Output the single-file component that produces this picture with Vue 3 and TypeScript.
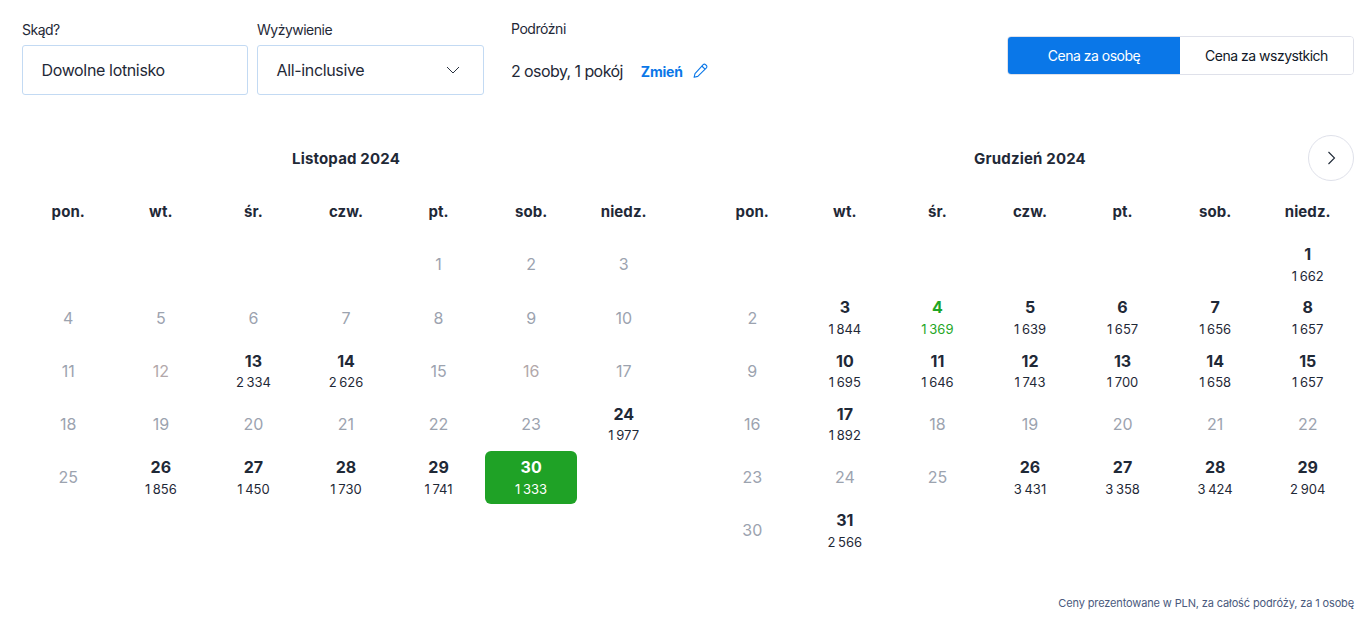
<script setup lang="ts">
type Day = { d: number; p?: string; low?: boolean; sel?: boolean; tint?: boolean }
const weekdays = ['pon.', 'wt.', 'śr.', 'czw.', 'pt.', 'sob.', 'niedz.']
function build(offset: number, count: number, prices: Record<number, string>, low: number[], sel: number[], tint: number[]) {
  const cells: (Day | null)[] = Array.from({ length: offset }, () => null)
  for (let d = 1; d <= count; d++) {
    cells.push({ d, p: prices[d], low: low.includes(d), sel: sel.includes(d), tint: tint.includes(d) })
  }
  return cells
}
const months = [
  {
    title: 'Listopad 2024',
    cells: build(4, 30, { 13: '2 334', 14: '2 626', 24: '1 977', 26: '1 856', 27: '1 450', 28: '1 730', 29: '1 741', 30: '1 333' }, [], [30], [12, 16])
  },
  {
    title: 'Grudzień 2024',
    cells: build(6, 31, { 1: '1 662', 3: '1 844', 4: '1 369', 5: '1 639', 6: '1 657', 7: '1 656', 8: '1 657', 10: '1 695', 11: '1 646', 12: '1 743', 13: '1 700', 14: '1 658', 15: '1 657', 17: '1 892', 26: '3 431', 27: '3 358', 28: '3 424', 29: '2 904', 31: '2 566' }, [4], [], [])
  }
]
</script>

<template>
  <div class="page">
    <header class="top">
      <div class="field from">
        <label>Skąd?</label>
        <div class="box">Dowolne lotnisko</div>
      </div>
      <div class="field board">
        <label>Wyżywienie</label>
        <div class="box select">
          <span>All-inclusive</span>
          <svg width="14" height="8" viewBox="0 0 14 8" fill="none"><path d="M1 1l6 6 6-6" stroke="#2a3240" stroke-width="1"/></svg>
        </div>
      </div>
      <div class="travellers">
        <div class="t-label">Podróżni</div>
        <div class="t-row">
          <span>2 osoby, 1 pokój</span>
          <a class="change">Zmień</a>
          <svg width="16" height="16" viewBox="0 0 16 16" fill="none" stroke="#0a77e8" stroke-width="1.1" stroke-linejoin="round"><path d="M11.2 1.6a1.6 1.6 0 0 1 2.3 0l.9.9a1.6 1.6 0 0 1 0 2.3l-8.6 8.6-3.7.9.9-3.7z"/><path d="M9.8 3l3.2 3.2"/></svg>
        </div>
      </div>
      <div class="toggle">
        <button class="on">Cena za osobę</button>
        <button>Cena za wszystkich</button>
      </div>
    </header>

    <div class="calendars">
      <section v-for="(m, i) in months" :key="m.title" class="month">
        <div class="m-head">
          <h2>{{ m.title }}</h2>
          <button v-if="i === 1" class="next" aria-label="Następny miesiąc">
            <svg width="9" height="14" viewBox="0 0 9 14" fill="none"><path d="M1.5 1l6 6-6 6" stroke="#1f2937" stroke-width="1.1"/></svg>
          </button>
        </div>
        <div class="grid wk">
          <div v-for="w in weekdays" :key="w" class="wd">{{ w }}</div>
        </div>
        <div class="grid days">
          <template v-for="(c, k) in m.cells" :key="k">
            <div v-if="!c" class="cell"></div>
            <div v-else class="cell" :class="{ priced: c.p, low: c.low, sel: c.sel, tint: c.tint }">
              <span class="num">{{ c.d }}</span>
              <span v-if="c.p" class="price">{{ c.p }}</span>
            </div>
          </template>
        </div>
      </section>
    </div>
    <p class="note">Ceny prezentowane w PLN, za całość podróży, za 1 osobę</p>
  </div>
</template>

<style>
html, body { margin: 0; background: #fff; }
</style>

<style scoped>
.page {
  width: 1363px;
  height: 625px;
  box-sizing: border-box;
  padding: 0 9px 14px 22px;
  display: flex;
  flex-direction: column;
  font-family: Inter, "Noto Sans", sans-serif;
  color: #1f2937;
  overflow: hidden;
}
.top { display: flex; height: 95px; flex: none; }
.field { display: flex; flex-direction: column; }
.from { width: 226px; margin-right: 9px; }
.board { width: 227px; margin-right: 27px; }
.field label { font-size: 14px; line-height: 20px; padding-top: 20px; height: 25px; letter-spacing: -0.5px; }
.box {
  box-sizing: border-box;
  height: 50px;
  border: 1px solid #c3daf3;
  border-radius: 3px;
  padding: 0 18px 0 18.5px;
  display: flex;
  align-items: center;
  font-size: 16px;
  letter-spacing: -0.35px;
}
.select { justify-content: space-between; padding-right: 23px; }
.travellers { width: 300px; }
.t-label { font-size: 14px; line-height: 20px; padding-top: 19px; letter-spacing: -0.45px; }
.t-row { display: flex; align-items: center; margin-top: 12px; height: 40px; font-size: 16px; letter-spacing: -0.58px; }
.change { color: #0a77e8; font-size: 14px; font-weight: 700; margin: 0 9.5px 0 18px; letter-spacing: -0.2px; }
.toggle {
  margin-left: auto;
  margin-top: 36px;
  display: flex;
  height: 39px;
  width: 347px;
  box-sizing: border-box;
  border: 1px solid #dfe1ea;
  border-radius: 4px;
  overflow: hidden;
}
.toggle button {
  border: 0;
  background: #fff;
  font: inherit;
  font-size: 14px;
  letter-spacing: -0.5px;
  color: #111827;
  padding: 0;
  flex: 1 1 0;
}
.toggle button.on { background: #0a77e8; color: #fff; flex: 0 0 172px; }
.calendars { display: flex; gap: 36px; padding-top: 40px; flex: none; }
.month { width: 648px; }
.m-head { position: relative; height: 46px; display: flex; align-items: center; justify-content: center; }
h2 { margin: 0; font-size: 15px; font-weight: 700; color: #1f2937; letter-spacing: 0.17px; }
.next {
  position: absolute;
  right: 0;
  top: 0;
  width: 46px;
  height: 46px;
  border-radius: 50%;
  border: 1px solid #dfe1ea;
  background: #fff;
  display: flex;
  align-items: center;
  justify-content: center;
  padding: 0;
}
.grid { display: grid; grid-template-columns: repeat(7, 1fr); }
.wk { margin-top: 16px; height: 40.9px; }
.wd { text-align: center; font-size: 15px; font-weight: 700; line-height: 30px; letter-spacing: 0.1px; }
.days { grid-auto-rows: 53.2px; }
.cell {
  display: flex;
  flex-direction: column;
  align-items: center;
  justify-content: center;
  font-size: 16px;
  color: #9ca3af;
  border-radius: 6px;
}
.cell.tint { color: #b2a8aa; }
.priced .num { color: #1f2937; font-weight: 700; line-height: 20px; }
.price { font-size: 13px; line-height: 17px; margin-top: 3.6px; color: #1f2937; word-spacing: -1px; }
.low .num, .low .price { color: #1ea626; }
.sel { background: #1fa226; }
.sel .num, .sel .price { color: #fff; }
.note {
  margin: auto 0 0;
  text-align: right;
  font-size: 11px;
  line-height: 15px;
  color: #4a5a7d;
  letter-spacing: -0.13px;
}
</style>
